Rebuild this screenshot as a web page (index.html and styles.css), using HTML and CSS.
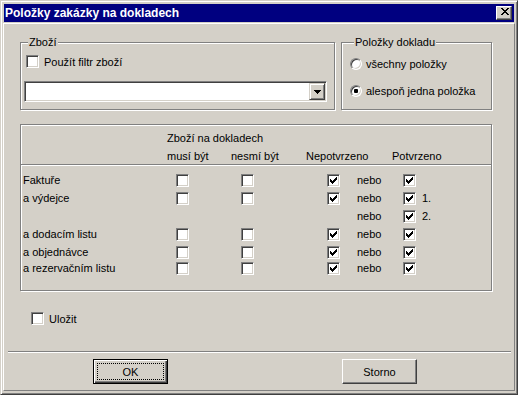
FILE: index.html
```html
<!DOCTYPE html>
<html lang="cs">
<head>
    <meta charset="UTF-8">
    <title>Položky zakázky na dokladech</title>
    <link rel="stylesheet" href="styles.css">
</head>
<body>
    <div class="window">
        <div class="titlebar">
            <span class="title">Položky zakázky na dokladech</span>
            <span class="close-btn">
                <svg width="8" height="7" viewBox="0 0 8 7" shape-rendering="crispEdges"><path d="M0 0h2v1H0zM6 0h2v1H6zM1 1h2v1H1zM5 1h2v1H5zM2 2h4v1H2zM3 3h2v1H3zM2 4h4v1H2zM1 5h2v1H1zM5 5h2v1H5zM0 6h2v1H0zM6 6h2v1H6z" fill="#000"/></svg>
            </span>
        </div>

        <div class="panel">
            <div class="top-row">
                <div class="group goods">
                    <span class="group-title">Zboží</span>
                    <div class="check-line"><span class="cb"></span>Použít filtr zboží</div>
                    <div class="combo">
                        <span class="combo-btn">
                            <svg width="7" height="4" viewBox="0 0 7 4" shape-rendering="crispEdges"><path d="M0 0h7v1H0zM1 1h5v1H1zM2 2h3v1H2zM3 3h1v1H3z" fill="#000"/></svg>
                        </span>
                    </div>
                </div>
                <div class="group doc-items">
                    <span class="group-title">Položky dokladu</span>
                    <div class="radio-line first"><span class="radio"></span>všechny položky</div>
                    <div class="radio-line"><span class="radio on"><span class="dot"></span></span>alespoň jedna položka</div>
                </div>
            </div>

            <div class="group matrix">
                <div class="matrix-head">
                    <div class="mrow">
                        <span class="span-head">Zboží na dokladech</span>
                    </div>
                    <div class="mrow short">
                        <span class="col2">musí být</span>
                        <span class="col3">nesmí být</span>
                        <span class="col4">Nepotvrzeno</span>
                        <span class="col6">Potvrzeno</span>
                    </div>
                </div>
                <div class="matrix-body" id="matrix-body"></div>
            </div>

            <div class="save-line"><span class="cb"></span>Uložit</div>

            <div class="separator"></div>

            <div class="buttons">
                <button type="button" class="btn default"><span class="focus">OK</span></button>
                <button type="button" class="btn">Storno</button>
            </div>
        </div>
    </div>

    <script>
        const checkSvg = '<svg width="7" height="7" viewBox="0 0 7 7" shape-rendering="crispEdges"><path d="M6 0h1v1H6zM5 1h2v1H5zM0 2h1v1H0zM4 2h3v1H4zM0 3h2v1H0zM3 3h3v1H3zM0 4h5v1H0zM1 5h3v1H1zM2 6h1v1H2z" fill="#000"/></svg>';

        // label, musí, nesmí, nepotvrzeno, potvrzeno, poznámka
        const rows = [
            { label: 'Faktuře', boxes: true, open: true, note: '' },
            { label: 'a výdejce', boxes: true, open: true, note: '1.' },
            { label: '', boxes: false, open: false, note: '2.' },
            { label: 'a dodacím listu', boxes: true, open: true, note: '' },
            { label: 'a objednávce', boxes: true, open: true, note: '' },
            { label: 'a rezervačním listu', boxes: true, open: true, note: '' }
        ];

        function box(checked) {
            return `<span class="cb${checked ? ' on' : ''}">${checked ? checkSvg : ''}</span>`;
        }

        const body = document.getElementById('matrix-body');
        rows.forEach(row => {
            const line = document.createElement('div');
            line.className = 'mrow';
            line.innerHTML = `
                <span>${row.label}</span>
                <span class="pick must">${row.boxes ? box(false) : ''}</span>
                <span class="pick mustnot">${row.boxes ? box(false) : ''}</span>
                <span class="pick open">${row.open ? box(true) : ''}</span>
                <span>nebo</span>
                <span class="pick done">${box(true)}${row.note ? '<span>' + row.note + '</span>' : ''}</span>
            `;
            body.appendChild(line);
        });
    </script>
</body>
</html>
```

FILE: styles.css
```css
* {
    box-sizing: border-box;
}

body {
    margin: 0;
    background-color: #d4d0c8;
    color: #000;
    font-family: "Liberation Sans", Arial, sans-serif;
    font-size: 11px;
}

.window {
    width: 518px;
    height: 395px;
    padding: 2px;
    background-color: #d4d0c8;
    border: 1px solid;
    border-color: #d4d0c8 #404040 #404040 #d4d0c8;
    box-shadow: inset 1px 1px #fff, inset -1px -1px #808080;
    display: flex;
    flex-direction: column;
}

.titlebar {
    height: 18px;
    margin: 1px 1px 1px;
    padding: 0 2px 0 1px;
    background-color: #000080;
    color: #fff;
    display: flex;
    align-items: center;
    justify-content: space-between;
}

.title {
    font-size: 12px;
    font-weight: bold;
    line-height: 16px;
    margin-top: -1px;
}

.close-btn {
    width: 16px;
    height: 14px;
    padding: 1px 0 0 4px;
    background-color: #d4d0c8;
    border: 1px solid;
    border-color: #fff #404040 #404040 #fff;
    box-shadow: inset -1px -1px #808080;
}

.close-btn svg {
    display: block;
}

.panel {
    flex: 1;
    margin-bottom: 1px;
    border: 1px solid;
    border-color: #fff #808080 #808080 #fff;
    display: flex;
    flex-direction: column;
}

/* group boxes */
.group {
    border: 1px solid #808080;
    box-shadow: inset 1px 1px #fff, 1px 1px #fff;
}

.group-title {
    display: block;
    width: max-content;
    margin: -7px 0 0 4px;
    padding: 0 1px;
    line-height: 13px;
    background-color: #d4d0c8;
}

.top-row {
    display: flex;
    gap: 6px;
    margin: 18px 0 0 16px;
}

.goods {
    width: 315px;
    height: 68px;
    padding: 0 7px 0 3px;
}

.check-line,
.save-line {
    display: flex;
    align-items: center;
    gap: 5px;
    height: 13px;
}

.check-line {
    margin: 6px 0 0 2px;
}

.combo {
    height: 21px;
    margin-top: 13px;
    padding: 1px;
    background-color: #fff;
    border: 1px solid;
    border-color: #808080 #fff #fff #808080;
    box-shadow: inset 1px 1px #404040, inset -1px -1px #d4d0c8;
    display: flex;
    justify-content: flex-end;
}

.combo-btn {
    width: 16px;
    height: 17px;
    background-color: #d4d0c8;
    border: 1px solid;
    border-color: #d4d0c8 #404040 #404040 #d4d0c8;
    box-shadow: inset 1px 1px #fff, inset -1px -1px #808080;
    display: flex;
    align-items: center;
    justify-content: center;
}

.doc-items {
    width: 151px;
    height: 68px;
    padding-left: 8px;
}

.radio-line {
    display: flex;
    align-items: center;
    gap: 4px;
    height: 12px;
    margin-top: 15px;
}

.radio-line.first {
    margin-top: 9px;
}

.radio {
    width: 12px;
    height: 12px;
    border-radius: 50%;
    background-color: #fff;
    border: 1px solid;
    border-color: #808080 #fff #fff #808080;
    box-shadow: inset 1px 1px #404040, inset -1px -1px #d4d0c8;
    display: flex;
    align-items: center;
    justify-content: center;
}

.dot {
    width: 4px;
    height: 4px;
    border-radius: 1px;
    background-color: #000;
}

/* checkbox */
.cb {
    flex: none;
    width: 13px;
    height: 13px;
    background-color: #fff;
    border: 1px solid;
    border-color: #808080 #fff #fff #808080;
    box-shadow: inset 1px 1px #404040, inset -1px -1px #d4d0c8;
}

.cb svg {
    display: block;
    margin: 2px 0 0 2px;
}

/* document matrix */
.matrix {
    width: 472px;
    height: 167px;
    margin: 14px 0 0 16px;
}

.matrix-head {
    height: 40px;
    padding: 4px 0 0 2px;
    border-bottom: 1px solid #808080;
    box-shadow: 0 1px #fff;
}

.matrix-body {
    padding: 6px 0 0 2px;
}

.mrow {
    display: grid;
    grid-template-columns: 144px 64px 75px 51px 35px auto;
    align-items: center;
    height: 18px;
}

.mrow.short {
    height: 17px;
}

.matrix-body .mrow:last-child {
    margin-top: -2px;
}

.span-head {
    grid-column: 2 / span 3;
}

.col2 {
    grid-column: 2;
}

.col3 {
    grid-column: 3;
}

.col4 {
    grid-column: 4 / span 2;
}

.col6 {
    grid-column: 6;
}

.pick {
    display: flex;
    align-items: center;
    gap: 6px;
}

.must {
    padding-left: 9px;
}

.mustnot {
    padding-left: 10px;
}

.open {
    padding-left: 21px;
}

.done {
    padding-left: 11px;
}

/* bottom */
.save-line {
    margin: 21px 0 0 27px;
}

.separator {
    height: 2px;
    margin: 26px 3px 0 4px;
    border-top: 1px solid #808080;
    border-bottom: 1px solid #fff;
}

.buttons {
    display: flex;
    gap: 174px;
    margin-top: 6px;
    padding-left: 89px;
}

.btn {
    width: 75px;
    height: 25px;
    padding: 0;
    font-family: inherit;
    font-size: 11px;
    color: #000;
    background-color: #d4d0c8;
    border: 1px solid;
    border-color: #fff #404040 #404040 #fff;
    box-shadow: inset -1px -1px #808080;
}

.btn.default {
    padding: 3px;
    border-color: #000;
    box-shadow: inset 1px 1px #fff, inset -1px -1px #404040, inset -2px -2px #808080;
    display: flex;
}

.focus {
    flex: 1;
    border: 1px dotted #000;
    display: flex;
    align-items: center;
    justify-content: center;
}
```
